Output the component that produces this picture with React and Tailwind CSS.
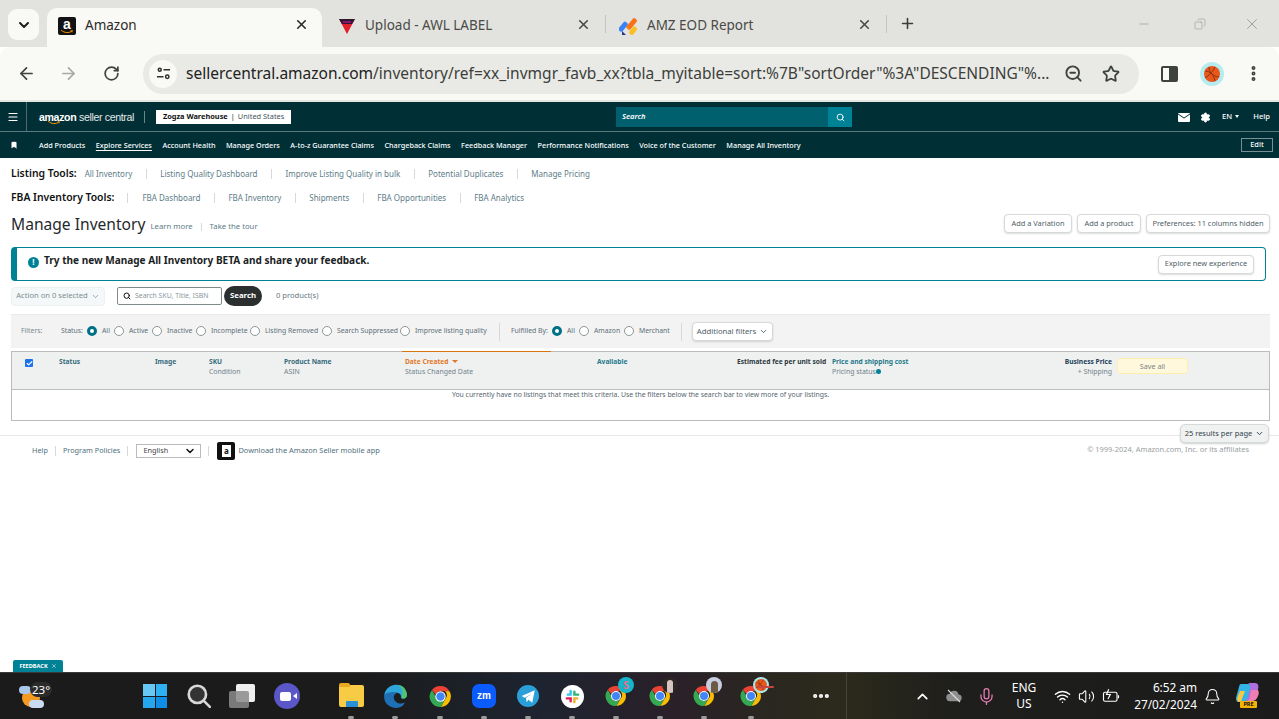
import React from "react";
import { ArrowLeft, ArrowRight, RotateCw, ChevronDown, ChevronUp, X, Plus, Minus, Search, ZoomOut, Star, MoreVertical, Menu, Settings, Bookmark, Check, Mic, Wifi, Volume2, Bell, Copy, MoreHorizontal } from "lucide-react";

const Sep = ({ c = "bg-[#d5d9d9]", h = "h-[10px]" }) => <span className={`block w-px ${h} ${c} shrink-0`} />;

const Smile = ({ className }) => (
  <svg viewBox="0 0 24 8" className={className} fill="none"><path d="M1 1c6 5 15 6 21 1" stroke="#f90" strokeWidth="2" strokeLinecap="round" /><path d="M19 1l4 0-1 4" stroke="#f90" strokeWidth="1.2" fill="none" /></svg>
);

const ChromeIcon = ({ size = 24 }) => (
  <svg viewBox="0 0 48 48" width={size} height={size}>
    <path d="M24 4a20 20 0 0 1 17.3 10H24a10 10 0 0 0-9.2 6L7.6 11.5A20 20 0 0 1 24 4z" fill="#ea4335" />
    <path d="M41.3 14A20 20 0 0 1 24.6 44l8.6-15a10 10 0 0 0-.6-15h8.7z" fill="#fbbc04" />
    <path d="M24.6 44A20 20 0 0 1 7.6 11.5L16 26a10 10 0 0 0 10.5 7.8l6.7-4.800z" fill="#34a853" />
    <circle cx="24" cy="24" r="10" fill="#fff" />
    <circle cx="24" cy="24" r="8" fill="#4285f4" />
  </svg>
);

const Ball = ({ size = 16 }) => (
  <svg viewBox="0 0 16 16" width={size} height={size} fill="none"><circle cx="8" cy="8" r="8" fill="#e8581c" /><path d="M1 5c4 0 9 3 10 10M5 1c0 5 3 9 10 10M11 1C9 5 5 10 1 12" stroke="#7a2a08" strokeWidth="0.8" /></svg>
);

const Tab = ({ icon, title, closeClass, width, active, pad = "ml-[10px]" }) => (
  <div className={`flex items-center h-[39px] pb-[4px] ${width} relative ${active ? "bg-[#f9f9f5] rounded-t-[10px] text-[#2b2b2b]" : "text-[#4a4a48]"}`}>
    <span className={`w-[20px] h-[20px] flex items-center justify-center ${pad} shrink-0`}>{icon}</span>
    <span className="ml-[8px] text-[13.5px] leading-none whitespace-nowrap">{title}</span>
    <X size={15} strokeWidth={2.6} className={`absolute top-[9px] ${closeClass}`} />
  </div>
);

const Row1Link = ({ children, active }) => (
  <span className={`whitespace-nowrap ${active ? "underline underline-offset-2" : ""}`}>{children}</span>
);

const ToolsRow = ({ label, links, sepFirst, className }) => (
  <div className={`flex items-center pl-[11px] ${className}`}>
    <span className="text-[10.4px] font-semibold text-[#111] whitespace-nowrap">{label}</span>
    {sepFirst && <span className="ml-[13px]"><Sep /></span>}
    <div className={`flex items-center gap-[13.5px] ${sepFirst ? "ml-[14px]" : "ml-[8px]"} text-[8px] text-[#5d7d88]`}>
      {links.map((l, i) => (
        <React.Fragment key={l}>
          {i > 0 && <Sep />}
          <span className="whitespace-nowrap">{l}</span>
        </React.Fragment>
      ))}
    </div>
  </div>
);

const PlainBtn = ({ children, className = "", text = "text-[7.4px]" }) => (
  <button className={`h-[19px] border border-[#d5d9d9] rounded-[4px] bg-white ${text} text-[#4f5e66] shadow-[0_1px_2px_rgba(15,17,17,0.15)] whitespace-nowrap flex items-center justify-center ${className}`}>{children}</button>
);

const Radio = ({ on }) => (
  <span className={`w-[10px] h-[10px] rounded-full shrink-0 ${on ? "border-[3px] border-[#007185] bg-white" : "border border-[#8d9696] bg-white"}`} />
);

const RadioItem = ({ label, on, w }) => (
  <span className={`flex items-center ${w}`}>
    <Radio on={on} />
    <span className="ml-[5px] whitespace-nowrap text-[6.85px] text-[#5d6f78]">{label}</span>
  </span>
);

const HeadCell = ({ a, b, className = "", aClass = "text-[#376b7c]", right }) => (
  <div className={`leading-[9.5px] pt-[5px] ${right ? "text-right" : ""} ${className}`}>
    <div className={`font-bold text-[6.65px] whitespace-nowrap ${aClass}`}>{a}</div>
    {b && <div className="text-[6.9px] text-[#71838b] whitespace-nowrap">{b}</div>}
  </div>
);

const Slot = ({ children, dot = true, w = "w-[44px]", className = "" }) => (
  <div className={`${w} h-[47px] relative flex items-center justify-center shrink-0 ${className}`}>
    {children}
    {dot && <span className="absolute bottom-[1px] left-1/2 -translate-x-1/2 w-[6px] h-[3px] rounded-full bg-[#9a9a9a]" />}
  </div>
);

const ChromeBadge = ({ badge }) => (
  <div className="relative w-[24px] h-[24px]">
    <ChromeIcon />
    <span className="absolute -top-[7px] -right-[6px]">{badge}</span>
  </div>
);

export default function App() {
  return (
    <div className="w-[1279px] h-[719px] relative overflow-hidden bg-white flex flex-col font-['Noto_Sans',sans-serif]">
      {/* tab strip */}
      <div className="h-[47px] bg-[#e2e3de] flex items-end shrink-0 relative">
        <div className="absolute left-[8px] top-[9px] w-[31px] h-[31px] rounded-[9px] bg-[#f9f9f5] flex items-center justify-center">
          <ChevronDown size={16} strokeWidth={3} className="text-[#1f1f1f]" />
        </div>
        <div className="flex items-end ml-[47px]">
          <Tab active width="w-[275px]" closeClass="left-[247px]" title="Amazon" icon={
            <span className="w-[18px] h-[18px] bg-[#131313] rounded-[2px] relative flex justify-center text-white font-bold text-[14px] leading-[14px] font-['Liberation_Sans']">a<Smile className="absolute bottom-[1px] left-[2px] w-[14px] h-[4px]" /></span>
          } />
          <Tab width="w-[283px]" pad="ml-[15px]" closeClass="left-[254px]" title="Upload - AWL LABEL" icon={
            <svg viewBox="0 0 20 20" width="20" height="20"><path d="M2 3h16l-8 15z" fill="#e2202c" /><path d="M2 3h16l-3 5H5z" fill="#2b1a2e" /><path d="M6 6h8" stroke="#f0b" strokeWidth="1" /></svg>
          } />
          <span className="mb-[14px]"><Sep c="bg-[#c4c5c1]" h="h-[18px]" /></span>
          <Tab width="w-[280px]" pad="ml-[13px]" closeClass="left-[251px]" title="AMZ EOD Report" icon={
            <svg viewBox="0 0 20 20" width="20" height="20"><rect x="2" y="5" width="5" height="11" rx="2" transform="rotate(40 4 10)" fill="#3b82f6" /><rect x="10" y="1" width="5" height="13" rx="2" transform="rotate(40 12 8)" fill="#f97316" /><rect x="12" y="10" width="5" height="9" rx="2" transform="rotate(40 14 14)" fill="#fbbf24" /><path d="M3 15l4 4H3z" fill="#1e3a8a" /></svg>
          } />
          <span className="mb-[14px]"><Sep c="bg-[#c4c5c1]" h="h-[18px]" /></span>
          <Plus size={17} strokeWidth={2.2} className="ml-[12px] mb-[15px] text-[#3c3c3a]" />
        </div>
        <div className="absolute right-0 top-[15px] flex items-center text-[#8a8a86]">
          <Minus size={14} strokeWidth={1} className="mr-[43px]" />
          <Copy size={12} strokeWidth={1} className="mr-[37px] -scale-x-100" />
          <X size={18} strokeWidth={1} className="mr-[18px]" />
        </div>
      </div>

      {/* toolbar */}
      <div className="h-[53px] bg-[#f9f9f5] rounded-t-[10px] flex items-center shrink-0 text-[#3f4340]">
        <ArrowLeft size={19} strokeWidth={2.2} className="ml-[17px]" />
        <ArrowRight size={19} strokeWidth={2.2} className="ml-[23px] text-[#a9aaa6]" />
        <RotateCw size={17} strokeWidth={2.4} className="ml-[25px]" />
        <div className="ml-[23px] w-[996px] h-[40px] rounded-full bg-[#e9eae5] flex items-center relative">
          <span className="ml-[6px] w-[28px] h-[28px] rounded-full bg-[#f9f9f5] flex items-center justify-center">
            <svg viewBox="0 0 16 16" width="15" height="15" fill="none" stroke="#2f302e" strokeWidth="1.6"><circle cx="4" cy="4" r="1.6" /><path d="M8 4h7M1 11.500h7" /><circle cx="12" cy="11.500" r="1.800" /></svg>
          </span>
          <span className="ml-[9px] text-[15.52px] text-[#222] whitespace-nowrap">sellercentral.amazon.com<span className="text-[#3d3f3c]">/inventory/ref=xx_invmgr_favb_xx?tbla_myitable=sort:%7B"sortOrder"%3A"DESCENDING"%...</span></span>
          <ZoomOut size={19} strokeWidth={2.4} className="absolute left-[921px] top-[10px]" />
          <Star size={18} strokeWidth={2.4} className="absolute left-[959px] top-[11px]" />
        </div>
        <span className="ml-[22px] w-[17px] h-[16px] border-[2px] border-[#3f4340] rounded-[2px] flex justify-end"><span className="w-[7px] bg-[#3f4340]" /></span>
        <span className="ml-[22px] w-[24px] h-[24px] rounded-full bg-[#b6ebf0] flex items-center justify-center"><Ball /></span>
        <MoreVertical size={19} strokeWidth={3} className="ml-[20px]" />
      </div>

      <div className="h-[2px] bg-[#e6e6e3] shrink-0" />

      {/* nav 1 */}
      <div className="h-[29px] bg-[#002f36] flex items-center text-white shrink-0 relative">
        <span className="w-[27px] h-full border-r border-[#50696e] flex items-center justify-center"><Menu size={12} strokeWidth={2.4} /></span>
        <div className="flex items-center flex-1 pt-[1px]">
          <span className="ml-[12px] relative text-[10.6px] leading-none whitespace-nowrap tracking-[-0.35px] font-['Liberation_Sans']"><b>amazon</b> <span className="font-light text-[#e4e9ea]">seller central</span><Smile className="absolute left-[6px] -bottom-[3px] w-[18px] h-[4px]" /></span>
          <span className="ml-[10px]"><Sep c="bg-[#6f8488]" h="h-[12px]" /></span>
          <span className="ml-[11px] h-[14px] w-[135px] bg-white text-[#0f1111] text-[7.4px] flex items-center justify-center whitespace-nowrap"><b>Zogza Warehouse</b><span className="mx-[3px]">|</span><span className="text-[#43555c]">United States</span></span>
          <div className="ml-[325px] w-[236px] h-[20px] bg-[#00606e] flex items-center justify-between">
            <span className="ml-[6px] text-[7.6px] italic font-semibold">Search</span>
            <span className="w-[24px] h-full bg-[#008296] flex items-center justify-center"><Search size={9} strokeWidth={2.4} /></span>
          </div>
          <svg viewBox="0 0 12 9" width="12" height="9" className="ml-[326px]"><rect width="12" height="9" rx="1" fill="#fff" /><path d="M0 1l6 4 6-4" stroke="#002f36" strokeWidth="1" fill="none" /></svg>
          <Settings size={11} fill="#fff" stroke="#fff" strokeWidth={2} className="ml-[10px]" />
          <span className="ml-[11px] text-[7.6px] font-medium flex items-center whitespace-nowrap">EN<span className="ml-[3px] border-x-[2.5px] border-x-transparent border-t-[3px] border-t-white" /></span>
          <span className="ml-[14px] text-[7.6px] font-medium">Help</span>
        </div>
      </div>
      <div className="h-px bg-[#5f7a7e] shrink-0" />

      {/* nav 2 */}
      <div className="h-[26px] bg-[#002f36] flex items-center text-white shrink-0 text-[7.25px] font-medium">
        <Bookmark size={8} fill="#fff" strokeWidth={1} className="ml-[10px]" />
        <div className="ml-[21px] flex items-center gap-[10.5px]">
          <Row1Link>Add Products</Row1Link>
          <Row1Link active>Explore Services</Row1Link>
          <Row1Link>Account Health</Row1Link>
          <Row1Link>Manage Orders</Row1Link>
          <Row1Link>A-to-z Guarantee Claims</Row1Link>
          <Row1Link>Chargeback Claims</Row1Link>
          <Row1Link>Feedback Manager</Row1Link>
          <Row1Link>Performance Notifications</Row1Link>
          <Row1Link>Voice of the Customer</Row1Link>
          <Row1Link>Manage All Inventory</Row1Link>
        </div>
        <span className="ml-auto mr-[6px] -mt-[1px] w-[32px] h-[14px] border border-[#7a8f92] flex items-center justify-center text-[7.4px]">Edit</span>
      </div>

      {/* tools */}
      <ToolsRow className="mt-[8px] h-[15px]" label="Listing Tools:" links={["All Inventory", "Listing Quality Dashboard", "Improve Listing Quality in bulk", "Potential Duplicates", "Manage Pricing"]} />
      <ToolsRow className="mt-[9px] h-[15px]" sepFirst label="FBA Inventory Tools:" links={["FBA Dashboard", "FBA Inventory", "Shipments", "FBA Opportunities", "FBA Analytics"]} />

      {/* title */}
      <div className="mt-[5px] h-[27px] flex items-center pl-[11px] pr-[9px] shrink-0">
        <span className="mt-[2px] text-[15.6px] text-[#1f2a2e] whitespace-nowrap">Manage Inventory</span>
        <div className="ml-[5px] mt-[7px] flex items-center gap-[8px] text-[7.75px] text-[#5d7d88]">
          <span className="whitespace-nowrap">Learn more</span><Sep h="h-[8px]" /><span className="whitespace-nowrap">Take the tour</span>
        </div>
        <div className="ml-auto flex items-center gap-[5px]">
          <PlainBtn className="w-[68px]">Add a Variation</PlainBtn>
          <PlainBtn className="w-[64px]">Add a product</PlainBtn>
          <PlainBtn className="w-[124px]">Preferences: 11 columns hidden</PlainBtn>
        </div>
      </div>

      {/* banner */}
      <div className="mt-[10px] ml-[11px] w-[1255px] h-[34px] border border-[#008296] border-l-[6px] rounded-[4px] flex items-center shrink-0">
        <span className="ml-[11px] -mt-[4px] w-[11px] h-[11px] rounded-full bg-[#008296] text-white text-[8px] font-bold flex items-center justify-center leading-none">!</span>
        <span className="ml-[5px] -mt-[7px] text-[10.05px] font-bold text-[#1a2224] whitespace-nowrap">Try the new Manage All Inventory BETA and share your feedback.</span>
        <PlainBtn className="ml-auto mr-[11px] w-[96px]">Explore new experience</PlainBtn>
      </div>

      {/* action row */}
      <div className="mt-[5px] h-[20px] pl-[11px] flex items-center shrink-0">
        <div className="w-[94px] h-[19px] rounded-[4px] bg-[#f5f8f8] border border-[#eef1f1] text-[7.6px] text-[#7b8c93] flex items-center justify-center whitespace-nowrap">Action on 0 selected<ChevronDown size={9} className="ml-[3px]" /></div>
        <div className="ml-[12px] w-[105px] h-[18px] border border-[#7f8a8d] rounded-[2px] flex items-center">
          <Search size={8} strokeWidth={3} className="ml-[5px] text-[#111]" />
          <span className="ml-[4px] text-[6.9px] text-[#8a979c] whitespace-nowrap">Search SKU, Title, ISBN</span>
        </div>
        <button className="ml-[2px] w-[38px] h-[20px] rounded-full bg-[#2b2f30] text-white text-[7.8px] font-bold">Search</button>
        <span className="ml-[14px] text-[7.6px] text-[#66777e] whitespace-nowrap">0 product(s)</span>
      </div>

      {/* filters */}
      <div className="mt-[8px] ml-[11px] w-[1259px] h-[34px] bg-[#f3f3f3] border-t border-[#e9e9e9] flex items-center shrink-0 text-[6.85px] text-[#5d6f78]">
        <span className="ml-[10px] w-[40px] text-[#7c8a90]">Filters:</span>
        <span className="w-[26px]">Status:</span>
        <RadioItem on label="All" w="w-[27px]" />
        <RadioItem label="Active" w="w-[38px]" />
        <RadioItem label="Inactive" w="w-[44px]" />
        <RadioItem label="Incomplete" w="w-[54px]" />
        <RadioItem label="Listing Removed" w="w-[72px]" />
        <RadioItem label="Search Suppressed" w="w-[78px]" />
        <RadioItem label="Improve listing quality" w="w-[87px]" />
        <span className="ml-[12px]"><Sep h="h-[18px]" /></span>
        <span className="ml-[11px] w-[41px] whitespace-nowrap">Fulfilled By:</span>
        <RadioItem on label="All" w="w-[27px]" />
        <RadioItem label="Amazon" w="w-[45px]" />
        <RadioItem label="Merchant" w="w-[45px]" />
        <span className="ml-[12px]"><Sep h="h-[18px]" /></span>
        <PlainBtn text="text-[7.7px]" className="ml-[10px] w-[81px] gap-[3px] bg-[#f4f5f5]">Additional filters<ChevronDown size={9} strokeWidth={2.4} /></PlainBtn>
      </div>

      {/* table */}
      <div className="mt-[3px] ml-[11px] w-[1259px] h-[70px] border border-[#bcbcbc] shrink-0 flex flex-col relative">
        <div className="absolute left-[390px] -top-[1px] w-[149px] h-[1px] bg-[#d9730d]" />
        <div className="h-[38px] bg-[#eff0f0] border-b border-[#bcbcbc] grid grid-cols-[47px_96px_54px_75px_121px_192px_140px_95px_218px_62px_76px_1fr] shrink-0">
          <div className="pl-[13px] pt-[7px]"><span className="w-[8px] h-[8px] bg-[#1a73e8] rounded-[1px] flex items-center justify-center"><Check size={7} strokeWidth={4} className="text-white" /></span></div>
          <HeadCell a="Status" />
          <HeadCell a="Image" />
          <HeadCell a="SKU" b="Condition" />
          <HeadCell a="Product Name" b="ASIN" />
          <HeadCell a={<span className="inline-flex items-center">Date Created<span className="ml-[3px] border-x-[3px] border-x-transparent border-t-[3px] border-t-[#e3782b]" /></span>} b="Status Changed Date" aClass="text-[#e3782b]" />
          <HeadCell a="Available" aClass="text-[#1f7a8c]" />
          <HeadCell a="Estimated fee per unit sold" aClass="text-[#2b3a40]" />
          <HeadCell a="Price and shipping cost" b={<span className="inline-flex items-center">Pricing status<span className="w-[5px] h-[5px] rounded-full bg-[#008296]" /></span>} aClass="text-[#1f7a8c]" />
          <HeadCell right a="Business Price" b="+ Shipping" aClass="text-[#23405a]" />
          <div className="pl-[5px] pt-[6px]"><div className="w-[71px] h-[16px] rounded-[4px] bg-[#fff8dc] border border-[#fdeeb0] text-[7.2px] text-[#7d8587] flex items-center justify-center">Save all</div></div>
          <div />
        </div>
        <div className="flex-1 flex justify-center text-[6.85px] text-[#56666d] whitespace-nowrap">You currently have no listings that meet this criteria. Use the filters below the search bar to view more of your listings.</div>
      </div>

      {/* footer */}
      <div className="mt-[14px] border-t border-[#e7e7e7] h-[30px] flex items-center shrink-0 relative text-[7.3px] text-[#52707c]">
        <div className="absolute right-[10px] -top-[12px] w-[89px] h-[19px] rounded-[5px] bg-[#f0f2f2] border border-[#d5d9d9] shadow-[0_1px_2px_rgba(15,17,17,0.2)] text-[7.5px] text-[#33444c] flex items-center justify-center gap-[3px] whitespace-nowrap">25 results per page<ChevronDown size={9} strokeWidth={2.6} /></div>
        <span className="ml-[32px]">Help</span>
        <span className="ml-[7px]"><Sep /></span>
        <span className="ml-[7px] whitespace-nowrap">Program Policies</span>
        <span className="ml-[7px]"><Sep /></span>
        <span className="ml-[8px] w-[65px] h-[14px] border border-[#bbb] flex items-center justify-between px-[6px] text-[#444]">English<ChevronDown size={12} strokeWidth={3} className="text-[#111] -mr-[2px]" /></span>
        <span className="ml-[7px]"><Sep /></span>
        <span className="ml-[8px] w-[18px] h-[18px] bg-[#111] rounded-[2px] flex items-center justify-center"><span className="w-[9px] h-[12px] bg-white text-[#111] text-[8px] font-bold leading-[12px] text-center">a</span></span>
        <span className="ml-[3px] whitespace-nowrap text-[7.43px]">Download the Amazon Seller mobile app</span>
        <span className="ml-auto mr-[30px] -mt-[1px] text-[#9aa0a2] whitespace-nowrap text-[7.45px]">© 1999-2024, Amazon.com, Inc. or its affiliates</span>
      </div>

      <div className="flex-1 relative">
        <div className="absolute left-[13px] bottom-0 w-[50px] h-[12px] rounded-t-[2px] bg-[#008296] text-white text-[5.6px] font-bold flex items-center justify-center gap-[3px]">FEEDBACK<X size={6} strokeWidth={2} /></div>
      </div>

      {/* taskbar */}
      <div className="h-[47px] shrink-0 flex items-center relative text-white bg-[linear-gradient(90deg,#1b1b1b_0%,#1b1b1b_28%,#1d2430_42%,#292029_52%,#2b2a1c_64%,#2c2a1c_66%,#1e1e1c_75%,#1b1b1b_100%)] border-t border-[#3a3a3a]">
        <div className="ml-[19px] w-[30px] h-[30px] relative">
          <span className="absolute left-[3px] top-[8px] w-[18px] h-[18px] rounded-full bg-[#f59a23]" />
          <span className="absolute left-0 top-[5px] w-[12px] h-[8px] rounded-full bg-[#a9c7ea]" />
          <span className="absolute left-[10px] top-[19px] w-[15px] h-[8px] rounded-full bg-[#c9dcf2]" />
          <span className="absolute left-[11px] top-[1px] px-[2px] rounded-full bg-[#2b2b2b] text-[11.5px] leading-[15px] whitespace-nowrap">23°</span>
        </div>
        <div className="ml-[84px] flex items-center">
          <Slot dot={false}>
            <span className="grid grid-cols-2 gap-[1px] w-[24px] h-[24px]">
              <span className="bg-[#67c8f5]" /><span className="bg-[#2fb0f0]" /><span className="bg-[#24a7ee]" /><span className="bg-[#0f8ee6]" />
            </span>
          </Slot>
          <Slot dot={false}>
            <svg viewBox="0 0 24 24" width="26" height="26" fill="none" strokeLinecap="round"><circle cx="10.500" cy="10.500" r="8" stroke="#d8d8d8" strokeWidth="2.400" fill="#333" /><path d="M16.500 16.500l5.500 5.500" stroke="#d8d8d8" strokeWidth="2.400" /></svg>
          </Slot>
          <Slot dot={false}>
            <span className="relative w-[28px] h-[24px]">
              <span className="absolute right-[2px] top-0 w-[19px] h-[18px] rounded-[2px] bg-[#efefef]" />
              <span className="absolute left-0 bottom-0 w-[20px] h-[17px] rounded-[2px] bg-[#8b8b8b]/85" />
            </span>
          </Slot>
          <Slot dot={false}>
            <span className="w-[26px] h-[26px] rounded-full bg-[#5b57c9] flex items-center justify-center">
              <span className="w-[11px] h-[9px] bg-white rounded-[2px] mr-[3px]" />
              <span className="absolute ml-[15px] border-y-[3px] border-y-transparent border-r-[4px] border-r-white" />
            </span>
          </Slot>
        </div>
        <div className="ml-[20px] flex items-center">
          <Slot>
            <span className="relative w-[25px] h-[22px] rounded-[2px] bg-[#f8cb45]">
              <span className="absolute -top-[2px] left-0 w-[11px] h-[4px] rounded-t-[2px] bg-[#e9a91e]" />
              <span className="absolute bottom-0 left-[7px] w-[12px] h-[6px] bg-[#2b8fd6] rounded-t-[1px]" />
            </span>
          </Slot>
          <Slot>
            <svg viewBox="0 0 24 24" width="26" height="26"><path d="M2 13C2 6 7 1.500 13 1.500c6 0 10 4.500 10 9.500 0 3-3 4-5 3-1-.5 1-4-4-5-5 0-12 0-12 4z" fill="#2ea8dc" /><path d="M2 13c0 6 5 10 11 10 4 0 7-2 8-5-3 2-9 1-10-4-1-3 3-5 3-5C9 8 2 8 2 13z" fill="#1f6fb5" /><path d="M18 14c2 1 5 0 5-3 0-5-4-9.500-10-9.500 6 1 7 6 5 12.500z" fill="#54c46a" /></svg>
          </Slot>
          <Slot className="ml-[1px]"><ChromeIcon size={25} /></Slot>
          <Slot>
            <span className="w-[24px] h-[24px] rounded-[7px] bg-[#0b5cff] text-white text-[10px] font-bold flex items-center justify-center leading-none font-['Liberation_Sans']">zm</span>
          </Slot>
          <Slot>
            <span className="w-[22px] h-[22px] rounded-full bg-[#2a9fd8] flex items-center justify-center">
              <svg viewBox="0 0 24 24" width="15" height="15"><path d="M1 11l21-9-4 20-6-5-3 4-1-7 10-7-12 7z" fill="#fff" /></svg>
            </span>
          </Slot>
          <Slot>
            <span className="w-[23px] h-[23px] rounded-full bg-white flex items-center justify-center">
              <svg viewBox="0 0 16 16" width="15" height="15" strokeLinecap="round" strokeWidth="2.600"><path d="M6 2v4H3" stroke="#36c5f0" fill="none" /><path d="M14 6h-4V3" stroke="#2eb67d" fill="none" /><path d="M10 14v-4h3" stroke="#ecb22e" fill="none" /><path d="M2 10h4v3" stroke="#e01e5a" fill="none" /></svg>
            </span>
          </Slot>
          <Slot><ChromeBadge badge={<span className="block w-[16px] h-[16px] rounded-full bg-[#12b5c9] text-[#ef6a8a] text-[10px] font-bold leading-[16px] text-center">S</span>} /></Slot>
          <Slot><ChromeBadge badge={<span className="block w-[16px] h-[16px] rounded-full bg-[#2d2626] overflow-hidden"><span className="block mx-auto mt-[3px] w-[6px] h-[13px] rounded-t-full bg-[#d7c4c0]" /></span>} /></Slot>
          <Slot><ChromeBadge badge={<span className="block w-[16px] h-[16px] rounded-full bg-[#c9cde0] overflow-hidden"><span className="block mx-auto mt-[4px] w-[7px] h-[12px] rounded-t-full bg-[#6b5a44]" /></span>} /></Slot>
          <Slot w="w-[49px]">
            <ChromeBadge badge={<span className="block w-[16px] h-[16px] rounded-full bg-[#a9e6ec] p-[2px]"><Ball size={12} /></span>} />
            <span className="absolute top-[13px] left-[31px] w-[17px] h-[2px] rounded-full bg-[#c8443f]" />
          </Slot>
        </div>
        <MoreHorizontal size={20} strokeWidth={3} className="ml-[36px]" />
        <span className="ml-[15px] w-px h-[47px] bg-[#45443a]" />
        <ChevronUp size={17} strokeWidth={2.4} className="ml-[67px]" />
        <svg viewBox="0 0 24 24" width="18" height="18" className="ml-[14px]"><path d="M7 19a5 5 0 0 1-.6-10A6 6 0 0 1 18 10a4.500 4.500 0 0 1-.5 9z" fill="#8f8f8f" /><path d="M4 4l16 16" stroke="#ddd" strokeWidth="1.500" /></svg>
        <Mic size={19} strokeWidth={1.6} className="ml-[14px] text-[#e87cb4]" />
        <div className="ml-[14px] w-[28px] text-center text-[12px] leading-[16px]">ENG<br />US</div>
        <Wifi size={17} strokeWidth={2} className="ml-[16px]" />
        <Volume2 size={17} strokeWidth={1.5} className="ml-[7px]" />
        <svg viewBox="0 0 24 24" width="18" height="18" className="ml-[7px]" fill="none" stroke="#fff" strokeWidth="1.500"><rect x="2" y="7" width="18" height="12" rx="2" /><path d="M22 11v4" /><path d="M9 3L6 10h5l-3 6" /></svg>
        <div className="absolute right-[82px] top-0 h-full flex flex-col justify-center text-right text-[11.8px] leading-[17px]">
          <span>6:52 am</span><span>27/02/2024</span>
        </div>
        <Bell size={17} strokeWidth={1.5} className="absolute left-[1204px] top-[15px]" />
        <svg viewBox="0 0 24 20" width="24" height="20" className="absolute left-[1236px] top-[9px]">
          <path d="M5 2h7c3 0 4 3 3 6l-3 9c-1 2-2 3-4 3H3C0 20-.5 17 .5 14L3 5c.4-2 1-3 2-3z" fill="#34b3e6" />
          <path d="M12 1h7c3 0 4 3 3 6l-2 7c-1 3-2 5-5 5h-6c2-1 3-3 3-5l2-7c1-3 0-5-2-6z" fill="#b06fe0" />
          <path d="M15 8h7c1 2 1 4 0 6-1 3-3 5-6 5h-5c2-1 3-3 3-5z" fill="#ee7fb2" />
          <path d="M2 20c-1-2-1-4 0-6l2-5h5l-3 8c0 1-1 3-4 3z" fill="#f6c945" />
        </svg>
        <span className="absolute left-[1240px] top-[28px] w-[17px] h-[7px] rounded-[1px] bg-[#f5b301] text-[#111] text-[5.5px] font-bold leading-[7px] text-center">PRE</span>
      </div>
    </div>
  );
}
